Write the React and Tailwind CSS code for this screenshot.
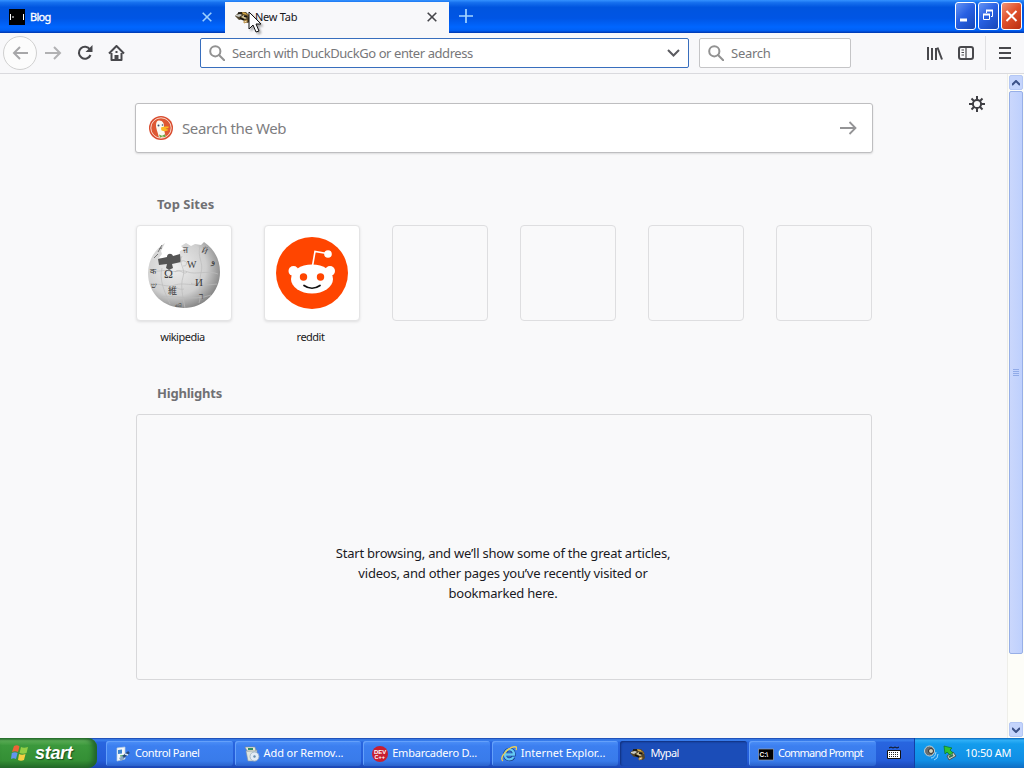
import React, { useState } from "react";

const MypalIcon = () => (
  <svg width="16" height="16" viewBox="0 0 16 16">
    <path d="M0 7l3-3 3-1 5 0 3 3 1 6-2 2-3-1-2-3-4 1z" fill="#51442b" />
    <path d="M1 6l4-1 2 1-3 2-3-1z" fill="#c9cbc5" />
    <path d="M7 3l4 1 1 2-4-1z" fill="#d3a643" />
    <path d="M6 8l3-2 3 3-2 1-2-1z" fill="#d6c79b" />
    <path d="M3 4h4M9 7l3 1M5 9l4 2" stroke="#14120d" strokeWidth="1.4" />
    <path d="M9 12l3-1v2l-3 1zM12 5l2 3" stroke="#b3812d" fill="#e8dcc0" strokeWidth=".8" />
  </svg>
);

const SearchIcon = () => (
  <svg width="16" height="16" viewBox="0 0 16 16" fill="none" stroke="#929292" strokeWidth="2">
    <circle cx="6.3" cy="6.3" r="5.1" />
    <path d="M10 10l5.2 5.2" strokeLinecap="round" />
  </svg>
);

const CloseIcon = ({ color }) => (
  <svg width="10" height="10" viewBox="0 0 10 10" stroke={color} strokeWidth="1.6">
    <path d="M.7.7l8.6 8.6M9.3.7L.7 9.3" />
  </svg>
);

const Duck = () => (
  <svg width="24" height="24" viewBox="0 0 24 24">
    <circle cx="12" cy="12" r="12" fill="#d94c2f" />
    <circle cx="12" cy="12" r="10.2" fill="#de5833" stroke="#f9d9cc" strokeWidth="1" />
    <path d="M8 5.5c1-1.6 5-1.5 6.4 1.5 1 2 .4 5 .8 7l1.3 6.500c-2 1.200-4 1.500-6.500.800C9 17 6.800 12 7 9c0-1.500.5-3 1-3.500z" fill="#fbf8ef" />
    <path d="M12 11.500c2-1 5-1.200 8-.700-.5 1.500-2.500 1.700-3.700 2 1 .6 2.500.6 3 1-1.500 2-5 1.500-7 .5z" fill="#fbb822" />
    <path d="M10 18.500l3 1.200 3-1.500.5 3-3-.8-2.500 1z" fill="#67a83f" />
    <circle cx="9.500" cy="9.500" r="1" fill="#35506d" />
    <circle cx="13.500" cy="9" r=".8" fill="#35506d" />
  </svg>
);

const Wikipedia = () => (
  <svg width="76" height="76" viewBox="0 0 76 76" fontFamily="Liberation Serif, serif" fill="#3b3b3b">
    <defs>
      <radialGradient id="globe" cx="38%" cy="38%" r="66%">
        <stop offset="0" stopColor="#eeeeee" />
        <stop offset=".65" stopColor="#cfcfcf" />
        <stop offset="1" stopColor="#858585" />
      </radialGradient>
    </defs>
    <path d="M7 20c3-5 7-9 12-12l-4 8 1 3-3 4 14 0 6-2 1-5 4-2-3-3 5-3 5 3 4-2 6 1 3-3c10 7 16 17 16 30 0 20-16 36-36 36S2 59 2 38c0-7 2-13 5-18z" fill="url(#globe)" />
    <path d="M12 24l9-2c0-4 5-4 6-1l7-2 1 8-9 2 1 4-4 2-3-2 1-4-8 1z" fill="#555" />
    <g fill="none" stroke="#bcbcbc" strokeWidth=".7">
      <path d="M4 35c9 3 13-1 19 1s12-2 19 1 20-2 30 2M4 49c11-1 16 4 25 1s19 2 42-1M12 62c14-3 35 5 53-2" />
      <path d="M16 33c-3 11 2 23 8 36M36 21c-4 8 4 12 1 21s0 20 2 31M54 11c-3 12 4 16 1 27s1 22-2 30" />
      <path d="M34 27q4-3 7 1-1 4-4 3M29 37c5-5 8 4 12 0M45 48c4 4 8-3 12 1M25 53c4-4 7 3 13 1" />
    </g>
    <text x="18" y="43" fontSize="12">Ω</text>
    <text x="41" y="33" fontSize="10">W</text>
    <text x="49" y="51" fontSize="11">И</text>
    <text x="22" y="59" fontSize="9" fontFamily="Noto Sans CJK JP, sans-serif">維</text>
    <text x="37" y="18" fontSize="9">ऩ</text>
    <text x="55" y="17" fontSize="8" transform="rotate(25 55 17)">Й</text>
    <text x="65" y="29" fontSize="9">و</text>
    <text x="53" y="64" fontSize="9">ר</text>
    <text x="4" y="39" fontSize="8">क</text>
    <text x="5" y="53" fontSize="8">ש</text>
    <text x="29" y="72" fontSize="6">வி</text>
    <path d="M8 23l4-4m0-2l4-7M13 14l3-1" stroke="#777" strokeWidth="1" />
  </svg>
);

const Reddit = () => (
  <svg width="72" height="72" viewBox="0 0 72 72">
    <circle cx="36" cy="36" r="36" fill="#ff4500" />
    <path d="M36.500 29l2.500-14.500 12 2" fill="none" stroke="#fff" strokeWidth="1.6" />
    <circle cx="52" cy="17" r="3.800" fill="#fff" />
    <circle cx="17.500" cy="34" r="5" fill="#fff" />
    <circle cx="54" cy="34" r="5" fill="#fff" />
    <ellipse cx="36" cy="42" rx="21" ry="14.500" fill="#fff" />
    <circle cx="27.500" cy="40" r="3.700" fill="#ff4500" />
    <circle cx="44.500" cy="40" r="3.700" fill="#ff4500" />
    <path d="M28 48.500q8 5.500 16 0" fill="none" stroke="#111" strokeWidth="1.7" strokeLinecap="round" />
  </svg>
);

const PanelIcon = () => (
  <svg width="16" height="16" viewBox="0 0 16 16">
    <path d="M2 2l8-1v12l-8 2z" fill="#f3f7fb" stroke="#b7cde0" strokeWidth=".7" />
    <path d="M3 4l4-.5v4L3 8z" fill="#3c83ce" />
    <path d="M5 10l4-.5" stroke="#38a54a" />
    <path d="M7 12l7-6" stroke="#28497a" strokeWidth="2.500" />
    <path d="M4 12l4-2 1 3-3 2z" fill="#8ba8c2" />
    <path d="M10 8l3 1" stroke="#d4e4f4" strokeWidth="1.500" />
  </svg>
);

const AddRemoveIcon = () => (
  <svg width="16" height="16" viewBox="0 0 16 16">
    <path d="M2 5l11-1-1 11H4z" fill="#dfe5df" stroke="#8494a4" strokeWidth=".6" />
    <path d="M1 1h10l1 4H3z" fill="#e9e8d8" stroke="#7b8a93" strokeWidth=".6" />
    <path d="M4 2h5v2H4z" fill="#338f63" />
    <circle cx="10.500" cy="10.500" r="4.500" fill="#e4ecf5" stroke="#9badc0" strokeWidth=".8" />
    <circle cx="10.500" cy="10.500" r="1.200" fill="#668dae" />
  </svg>
);

const DevIcon = () => (
  <svg width="16" height="16" viewBox="0 0 16 16" fontFamily="Liberation Sans, sans-serif" fontWeight="bold" fill="#fff">
    <circle cx="8" cy="8" r="8" fill="#c91f30" />
    <text x="2" y="7.500" fontSize="6">DEV</text>
    <text x="2.500" y="13" fontSize="5.500">C++</text>
  </svg>
);

const ExplorerIcon = () => (
  <svg width="16" height="16" viewBox="0 0 16 16" fill="none">
    <path d="M4 8.500h9C13 1.500 4 2 4 8.500c0 6 6.500 6 8.500 2.500" stroke="#183a82" strokeWidth="3.600" />
    <path d="M4 8.500h9C13 1.500 4 2 4 8.500c0 6 6.500 6 8.500 2.500" stroke="#65c9f5" strokeWidth="2.300" />
    <path d="M2 15C-3 12 9-1 15 1c1 .5.5 2 0 3" stroke="#edcf54" strokeWidth="1.400" />
  </svg>
);

const CmdIcon = () => (
  <svg width="16" height="16" viewBox="0 0 16 16">
    <path d="M.5 3h15v11H.5z" fill="#000" stroke="#9ba3af" strokeWidth=".7" />
    <text x="1.500" y="10.500" fontFamily="Liberation Sans, sans-serif" fontWeight="bold" fontSize="6.500" fill="#fff">C:\</text>
  </svg>
);

const tasks = [
  { label: "Control Panel", Icon: PanelIcon, track: "tracking-[-0.4px]" },
  { label: "Add or Remov...", Icon: AddRemoveIcon, track: "tracking-[-0.1px]" },
  { label: "Embarcadero D...", Icon: DevIcon, track: "tracking-[-0.22px]" },
  { label: "Internet Explor...", Icon: ExplorerIcon, track: "tracking-[-0.02px]" },
  { label: "Mypal", Icon: MypalIcon, track: "tracking-[-0.6px]" },
  { label: "Command Prompt", Icon: CmdIcon, track: "tracking-[-0.76px]" },
];

const TitleBar = () => (
  <header className="relative flex h-[33px] shrink-0 bg-[linear-gradient(#3492ff_0%,#1670ee_8%,#0055df_22%,#0055e4_55%,#0066ff_82%,#0060f5_92%,#0035ad_100%)]">
    <div className="flex h-full w-[225px] items-center pl-[9px] pr-[13px] pt-px">
      <svg width="16" height="16" viewBox="0 0 16 16">
        <path d="M0 0h16v16H0z" fill="#000" />
        <path d="M1.500 5v6M14.500 5v6M3 8h2" stroke="#fff" strokeWidth="1" />
      </svg>
      <span className="ml-[5px] flex-1 text-[11px] tracking-[-0.7px] text-white [-webkit-text-stroke:0.3px_white]">Blog</span>
      <CloseIcon color="#9bd0ff" />
    </div>
    <div className="mt-[2px] flex h-[31px] w-[224px] items-center bg-[#f8f8fa] pb-px pl-[10px] pr-[12px]">
      <MypalIcon />
      <span className="ml-[4px] flex-1 pt-px text-[11px] tracking-[-0.25px] text-[#15151a]">New Tab</span>
      <CloseIcon color="#45454a" />
    </div>
    <svg className="ml-[10px] mt-[9px]" width="14" height="14" stroke="#a4d5ff" strokeWidth="1.7">
      <path d="M7 0v14M0 7h14" />
    </svg>
    <div className="ml-auto mr-[2px] mt-[2px] flex gap-[2px]">
      <button className="h-[28px] w-[21px] rounded-[3px] border border-white bg-[linear-gradient(135deg,#6594f4,#2860e3_45%,#1746b7)]">
        <svg width="19" height="26"><path d="M4 17h7" stroke="#fff" strokeWidth="3" /></svg>
      </button>
      <button className="h-[28px] w-[21px] rounded-[3px] border border-white bg-[linear-gradient(135deg,#6594f4,#2860e3_45%,#1746b7)]">
        <svg width="19" height="26" fill="none" stroke="#fff">
          <path d="M4.500 11.500h6v5h-6zM7.500 10V7.500h6v6H12" /><path d="M4 11.500h7M7 7.500h7" strokeWidth="2" />
        </svg>
      </button>
      <button className="h-[28px] w-[21px] rounded-[3px] border border-white bg-[linear-gradient(135deg,#ef9479,#e1522c_45%,#b92e10)]">
        <svg width="19" height="26" stroke="#fff" strokeWidth="2"><path d="M4.500 8l10 10M14.500 8l-10 10" /></svg>
      </button>
    </div>
    <svg className="absolute left-[248px] top-[11px] drop-shadow-[2px_2px_1px_#00000055]" width="16" height="23">
      <path d="M1 1v17l4-4 3 7 3-1-3-7h5z" fill="#fff" stroke="#111" strokeWidth="1" />
    </svg>
  </header>
);

const Toolbar = () => (
  <nav className="flex h-[41px] shrink-0 items-center border-b border-[#dadade] bg-[#f8f8fa]">
    <div className="ml-[3px] flex h-[34px] w-[34px] items-center justify-center rounded-full border border-[#d0d0d0] bg-[#fcfcfc]">
      <svg width="16" height="14" fill="none" stroke="#a7a7a9" strokeWidth="2"><path d="M16 7H2M8 1L2 7l6 6" /></svg>
    </div>
    <svg className="ml-[8px]" width="17" height="14" fill="none" stroke="#b1b1b3" strokeWidth="2"><path d="M0 7h15M9 1l6 6-6 6" /></svg>
    <svg className="ml-[15px]" width="17" height="16" viewBox="0 0 17 16" fill="none" stroke="#48484c" strokeWidth="2.100">
      <path d="M13 4.500A6 6 0 1 0 13.500 10" /><path d="M15.500 0v7H8.500z" fill="#48484c" stroke="none" />
    </svg>
    <svg className="ml-[14px]" width="17" height="16" viewBox="0 0 17 16" fill="none" stroke="#48484c" strokeWidth="2">
      <path d="M1 8.500L8.500 1 16 8.500M3.500 8v7h10V8" strokeLinejoin="round" /><path d="M7.500 15v-4h2v4M8.500 6v2" />
    </svg>
    <div className="ml-[75px] flex h-[30px] w-[489px] items-center rounded-[2px] border border-[#386ebd] bg-white pl-[8px] pr-[8px] text-[13px] text-[#77777a]">
      <SearchIcon />
      <span className="ml-[7px] flex-1 whitespace-nowrap pt-[2px] tracking-[-0.42px]">Search with DuckDuckGo or enter address</span>
      <svg width="13" height="9" fill="none" stroke="#5b5b60" strokeWidth="2"><path d="M1 1l5.500 5.500L12 1" /></svg>
    </div>
    <div className="ml-[10px] flex h-[30px] w-[152px] items-center rounded-[2px] border border-[#c5c5c7] bg-white pl-[8px] text-[13px] text-[#77777a]">
      <SearchIcon />
      <span className="ml-[7px] pt-[2px] tracking-[-0.25px]">Search</span>
    </div>
    <svg className="ml-auto" width="16" height="15" stroke="#48484c" strokeWidth="2"><path d="M1 1v13M5 2v12M9 2v12M10.500 1.500l4.500 12" /></svg>
    <svg className="ml-[15px]" width="17" height="14" fill="none" stroke="#48484c" strokeWidth="2">
      <rect x="1" y="1" width="14" height="12" rx="2" /><path d="M8 1v12M3.500 4h2.500M3.500 6.500h2.500M3.500 9h2.500" strokeWidth="1.200" />
    </svg>
    <div className="ml-[10px] h-[34px] w-px bg-[#e0e0e3]" />
    <svg className="ml-[13px] mr-[12px]" width="13" height="12" stroke="#48484c" strokeWidth="2"><path d="M0 1h12M0 6h12M0 11h12" /></svg>
  </nav>
);

const Scrollbar = () => (
  <div className="flex w-[17px] flex-col items-center border-l border-[#eeeee9] bg-[#fdfdf8] py-px">
    <div className="flex h-[15px] w-[14px] items-center justify-center rounded-[2px] border border-[#b4c7f4] bg-[#c4d4fc]">
      <svg width="8" height="6" fill="none" stroke="#3b5188" strokeWidth="2"><path d="M0 5l4-4 4 4" /></svg>
    </div>
    <div className="mt-px flex h-[563px] w-[14px] items-center justify-center rounded-[2px] border border-[#97afe7] bg-[linear-gradient(90deg,#cad7fc,#bed0fd)]">
      <svg width="6" height="8" stroke="#91abe8"><path d="M0 .5h6M0 2.500h6M0 4.500h6M0 6.500h6" /></svg>
    </div>
    <div className="mt-auto flex h-[15px] w-[14px] items-center justify-center rounded-[2px] border border-[#b4c7f4] bg-[#c4d4fc]">
      <svg width="8" height="6" fill="none" stroke="#3b5188" strokeWidth="2"><path d="M0 1l4 4 4-4" /></svg>
    </div>
  </div>
);

const Tile = ({ label, children }) => (
  <div className="w-[96px] text-center">
    <div
      className={
        children
          ? "flex h-[96px] items-center justify-center rounded-[4px] border border-[#e4e4e5] bg-white shadow-[0_1px_3px_#0000001c]"
          : "h-[96px] rounded-[4px] border border-[#dedee0]"
      }
    >
      {children}
    </div>
    <div className="mt-[8px] h-[16px] pr-[3px] text-[11px] leading-[16px] tracking-[-0.5px] text-[#19191c]">{label}</div>
  </div>
);

const NewTab = () => {
  const [query, setQuery] = useState("");

  return (
    <div className="relative flex-1 pl-[135px]">
      <svg className="absolute right-[22px] top-[22px]" width="16" height="16" viewBox="0 0 16 16" fill="none" stroke="#3e3e43" strokeWidth="2">
        <circle cx="8" cy="8" r="4.100" />
        <path d="M8 0v4M8 12v4M0 8h4M12 8h4M2.500 2.500l2.700 2.700M10.800 10.800l2.700 2.700M2.500 13.500l2.700-2.700M10.800 5.200l2.700-2.700" />
      </svg>
      <div className="mt-[29px] flex h-[50px] w-[738px] items-center rounded-[3px] border border-[#bebec0] bg-white pl-[13px] pr-[15px] shadow-[0_1px_2px_#0000001f]">
        <Duck />
        <input
          value={query}
          onChange={(e) => setQuery(e.target.value)}
          placeholder="Search the Web"
          className="ml-[9px] flex-1 text-[15px] tracking-[-0.4px] outline-none placeholder:text-[#7d7d7f]"
        />
        <svg width="17" height="14" fill="none" stroke="#949496" strokeWidth="1.800"><path d="M0 7h15.500M9.500 1l6 6-6 6" /></svg>
      </div>
      <h2 className="ml-[22px] mt-[41px] text-[13px] font-bold leading-[20px] text-[#707073]">Top Sites</h2>
      <div className="ml-px mt-[11px] flex gap-[32px]">
        <Tile label="wikipedia"><Wikipedia /></Tile>
        <Tile label="reddit"><Reddit /></Tile>
        <Tile />
        <Tile />
        <Tile />
        <Tile />
      </div>
      <h2 className="ml-[22px] mt-[38px] text-[13px] font-bold leading-[20px] tracking-[-0.2px] text-[#707073]">Highlights</h2>
      <div className="ml-px mt-[11px] flex h-[266px] w-[736px] justify-center rounded-[3px] border border-[#d8d8da] pt-[128px]">
        <p className="whitespace-nowrap pr-[2px] text-center text-[13px] leading-[20px] tracking-[-0.22px] text-[#1a1a1f]">
          Start browsing, and we’ll show some of the great articles,<br />
          videos, and other pages you’ve recently visited or<br />
          bookmarked here.
        </p>
      </div>
    </div>
  );
};

const Taskbar = () => (
  <footer className="flex h-[30px] shrink-0 bg-[linear-gradient(#1740a6_0%,#3b82ef_6%,#2865df_15%,#245cd9_75%,#1b46b3_100%)] text-[11px] text-white">
    <button className="flex w-[97px] items-center rounded-r-[9px] bg-[linear-gradient(#276f2b_0%,#5caf57_9%,#3b983c_25%,#348f35_75%,#246c29_100%)] pl-[11px] shadow-[inset_-4px_0_5px_#21632a]">
      <svg width="18" height="18" viewBox="0 0 18 18">
        <path d="M3 2c2-1 4-1 5.500.4L7 8C5 7 3 7 1 8z" fill="#ed6337" />
        <path d="M10 3c2 1 4 1 7 0l-1.500 6c-2 1-5 1-7 0z" fill="#92ce45" />
        <path d="M.8 9c2-1 4-1 5.800 0L5 15c-2-1-3-1-5 0z" fill="#6295ed" />
        <path d="M8 10c2 1 4 1 6.500 0L13 16c-2 1-4 1-6 0z" fill="#f5ce42" />
      </svg>
      <span className="ml-[6px] font-['Liberation_Sans',sans-serif] text-[18px] font-bold italic tracking-[-0.3px] [text-shadow:1px_1px_1px_#184b1d]">start</span>
    </button>
    <div className="ml-[9px] flex gap-[2px] pt-[3px]">
      {tasks.map(({ label, Icon, track }) => (
        <button
          key={label}
          className={
            label === "Mypal"
              ? "flex h-[25px] w-[126.6px] items-center rounded-[3px] bg-[#1b4db8] pl-[10px] shadow-[inset_1px_1px_2px_#102f7b]"
              : "flex h-[25px] w-[126.6px] items-center rounded-[3px] bg-[linear-gradient(#4d90f8,#3c7ff0_20%,#397bea_80%,#2b62cb)] pl-[9px] shadow-[inset_1px_1px_0_#64a0fa]"
          }
        >
          <Icon />
          <span className={`ml-[4px] whitespace-nowrap ${track}`}>{label}</span>
        </button>
      ))}
    </div>
    <svg className="ml-[11px] mt-[8px]" width="14" height="13">
      <path d="M2 2l2-1 2 1 2-1 2 1 2-1" stroke="#111" fill="none" />
      <path d="M.5 4.500h13v8H.5z" fill="#fff" stroke="#111" />
      <path d="M2 6.500h10M2 8.500h10M2 10.500h10" stroke="#222" strokeDasharray="1 1" />
    </svg>
    <div className="ml-auto flex w-[110px] items-center border-l border-[#123fa5] bg-[linear-gradient(#0b62b9_0%,#31b0f6_7%,#139ced_20%,#108ee5_75%,#0f6dc3_100%)] pl-[8px]">
      <svg width="16" height="16" viewBox="0 0 16 16">
        <circle cx="6.500" cy="6" r="5" fill="#686e70" stroke="#c4d1d2" />
        <circle cx="8" cy="6" r="2.500" fill="#d4d2ba" stroke="#333" />
        <path d="M8 13q4 0 5-6M11 15q4-1 4-6" stroke="#9dd9ff" fill="none" />
      </svg>
      <svg className="ml-[4px]" width="14" height="16" viewBox="0 0 14 16">
        <path d="M4 11l6-4 3 4-7 4z" fill="#d1d3c5" stroke="#46545c" />
        <path d="M1 1l8 2-2 2 3 3-3 2-3-3-2 2z" fill="#30c431" stroke="#087329" strokeWidth=".7" />
        <path d="M6 12l4-2" stroke="#337552" strokeWidth="2" />
      </svg>
      <span className="ml-[8px] whitespace-nowrap tracking-[-0.2px]">10:50 AM</span>
    </div>
  </footer>
);

const App = () => {
  return (
    <div className="flex h-[768px] w-[1024px] flex-col overflow-hidden bg-[#f9f9fa] font-['Noto_Sans',sans-serif]">
      <TitleBar />
      <Toolbar />
      <main className="flex min-h-0 flex-1">
        <NewTab />
        <Scrollbar />
      </main>
      <Taskbar />
    </div>
  );
};

export default App;
